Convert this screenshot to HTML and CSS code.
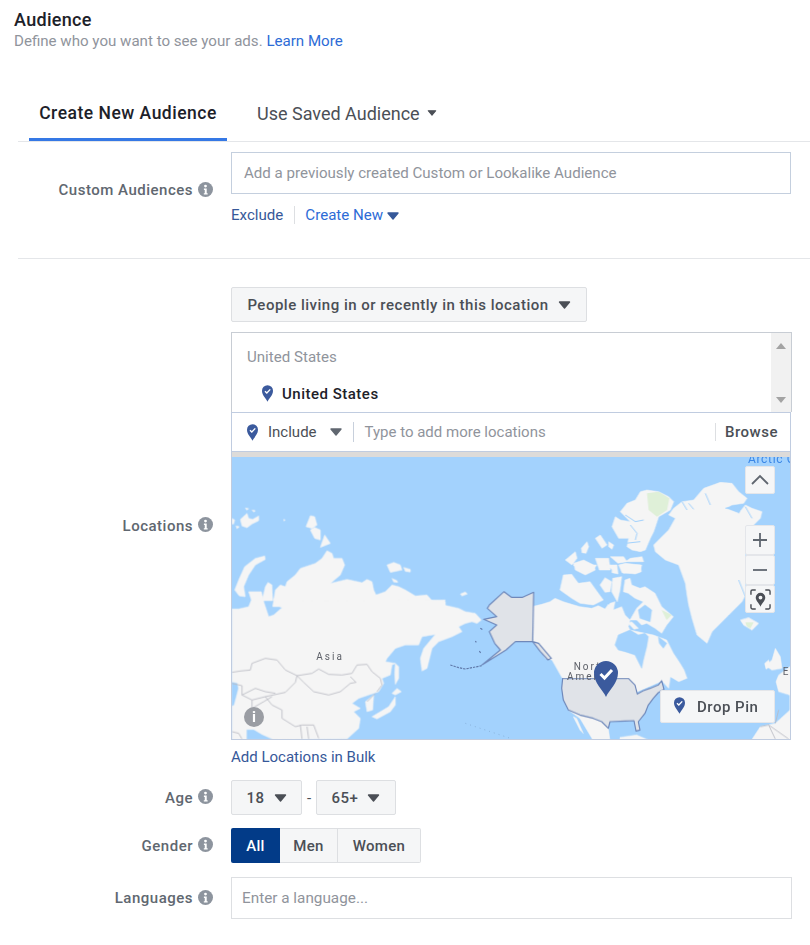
FILE: index.html
```html
<!DOCTYPE html>
<html lang="en">
<head>
<meta charset="utf-8">
<title>Audience</title>
<link rel="stylesheet" href="styles.css">
</head>
<body>
<svg class="defs" width="0" height="0" aria-hidden="true">
  <symbol id="caret" viewBox="0 0 12 8"><path d="M1 1h10L6 7z" stroke="currentColor" stroke-width="1.4" stroke-linejoin="round" fill="currentColor"/></symbol>
  <symbol id="info" viewBox="0 0 16 16"><circle cx="8" cy="8" r="8" fill="#8d949e"/><circle cx="8" cy="4.3" r="1.5" fill="#fff"/><path d="M6.3 7h3v5h1v1.4H6.2V12h1V8.4h-.9z" fill="#fff"/></symbol>
  <symbol id="pin" viewBox="0 0 24 36"><path d="M12 36C9 29 0 22 0 12a12 12 0 0 1 24 0c0 10-9 17-12 24z" fill="#3b5a9d"/><path d="M6.5 13l4 4 7.500-8" fill="none" stroke="#fff" stroke-width="3"/></symbol>
</svg>

<header class="head">
  <h1 class="title">Audience</h1>
  <p class="sub">Define who you want to see your ads. <a class="learn" href="#">Learn More</a></p>
</header>

<nav class="tabs">
  <a class="tab tab-on" href="#">Create New Audience</a>
  <a class="tab" href="#">Use Saved Audience <svg class="tab-caret"><use href="#caret"/></svg></a>
</nav>

<section class="row row-custom">
  <div class="label">Custom Audiences <svg class="info"><use href="#info"/></svg></div>
  <div class="field">
    <div class="input input-tall">Add a previously created Custom or Lookalike Audience</div>
    <div class="links">
      <a class="link-dark" href="#">Exclude</a>
      <span class="sep"></span>
      <a class="link" href="#">Create New <svg class="link-caret"><use href="#caret"/></svg></a>
    </div>
  </div>
</section>

<hr class="rule">

<section class="row row-loc">
  <div class="label">Locations <svg class="info"><use href="#info"/></svg></div>
  <div class="field">
    <button class="btn btn-wide">People living in or recently in this location <svg class="btn-caret"><use href="#caret"/></svg></button>
    <div class="selbox">
      <div class="sellist">
        <div class="selhead">United States</div>
        <div class="selitem"><svg class="pin-s"><use href="#pin"/></svg>United States</div>
      </div>
      <div class="scroll"><span class="arr arr-up"></span><span class="arr arr-down"></span></div>
    </div>
    <div class="include">
      <svg class="pin-s"><use href="#pin"/></svg>
      <span class="inc-label">Include</span>
      <svg class="inc-caret"><use href="#caret"/></svg>
      <span class="inc-text">Type to add more locations</span>
      <span class="browse">Browse</span>
    </div>
    <div class="map">
      <svg class="map-svg" viewBox="0 21 1674 849" role="img" aria-label="World map">
        <g class="shapes">
        <g class="land">
          <path d="M8,420L22,385L38,350L70,325L98,318L100,328L70,345L50,375L35,410L40,440L22,438Z"/>
          <path d="M90,452L100,410L108,397L120,405L122,452Z"/>
          <path d="M222,230L235,197L248,200L255,225L240,235Z M235,240L248,232L265,240L265,270L248,265Z M265,292L278,255L295,280Z"/>
          <path d="M25,208L45,190L50,205L62,208L80,198L80,212L60,222L45,233L30,228Z M0,205L8,210L5,222L0,222Z M12,228L22,230L15,236Z M60,180L70,182L65,186Z M40,174L50,176L44,180Z M155,208L160,210L156,213Z"/>
          <path d="M122,470L130,420L145,405L160,410L165,395L190,375L205,355L250,340L270,325L285,302L300,310L305,325L330,325L338,345L325,375L295,400L345,388L390,398L405,388L420,395L425,420L432,435L460,425L480,405L500,410L520,420L550,438L585,435L600,452L640,455L640,470Z"/>
          <path d="M465,345L485,337L505,345L510,360L475,367Z M515,352L535,358L535,366L520,364Z M480,385L495,392L497,397L485,396Z M685,432L700,426L706,432L690,438Z"/>
          <g transform="translate(0,435)">
            <path d="M0,42L20,42L50,35L58,15L50,-10L88,-10L95,20L110,65L125,60L150,38L130,28L125,10L135,20L640,15L635,30L680,40L700,50L730,55L748,75L735,85L720,80L700,85L680,95L690,110L660,125L620,140L600,160L585,220L570,228L565,190L575,160L610,118L570,125L560,150L520,150L490,160L465,190L460,200L490,205L480,210L475,240L450,250L455,265L440,290L410,300L380,310L360,325L385,340L365,350L385,370L380,400L345,432L0,436Z"/>
            <path d="M400,320L425,300L422,345L405,350Z M420,365L470,335L490,305L490,330L475,350L435,372Z M480,295L495,280L508,290L490,300Z M490,205L500,215L500,250L490,268L488,235Z"/>
          </g>
          <g transform="translate(840,0)">
            <path d="M325,185L345,160L370,150L385,125L405,120L440,125L470,140L485,155L475,180L440,200L425,245L415,265L400,300L385,305L360,300L345,290L350,265L320,265L300,230L310,200L325,210L355,215L340,200Z"/>
            <path d="M355,325L390,320L395,335L340,335Z M320,345L340,340L385,345L388,365L370,372L330,368Z M250,265L265,255L285,285L270,295Z M290,275L305,285L300,298L290,290Z M208,295L225,275L230,290L222,310L210,308Z M160,330L190,305L195,325L180,345Z M185,340L215,330L245,345L250,360L220,375L190,360Z M250,325L290,325L295,360L262,360Z M295,320L335,320L345,335L318,340Z M300,350L315,345L318,372L300,368Z"/>
            <path d="M425,285L445,265L470,240L490,205L470,195L485,175L510,155L545,150L575,115L625,97L660,100L680,125L705,145L695,160L660,165L640,175L680,190L700,165L720,175L750,185L745,205L715,235L700,260L700,435L690,455L650,495L600,545L585,580L555,555L540,505L530,465L525,435L520,400L500,345L460,330L430,305Z"/>
          </g>
          <g transform="translate(894,345)">
            <path d="M5,125L35,118L60,110L75,100L100,110L125,118L150,125L185,130L205,122L225,132L235,118L250,135L275,125L285,150L300,165L295,185L300,195L345,205L370,210L410,225L430,265L450,295L462,315L471,340L446,350L421,335L416,370L396,348L300,390L96,338L66,285L46,280L26,235L8,230Z"/>
            <path d="M90,75L100,30L125,28L145,55L180,50L205,85L220,105L190,120L150,115L125,100Z"/>
            <path d="M210,60L225,38L245,50L240,80L225,82Z M248,40L275,35L270,75L262,110L245,80Z M240,115L255,110L250,135L232,130Z"/>
            <path d="M280,80L285,45L300,40L305,60L330,70L345,65L375,85L395,125L430,155L410,180L395,205L375,190L350,175L335,180L320,165L300,165L320,130L340,110L315,100L295,85Z"/>
            <path d="M130,0L160,25L190,15L200,0Z M230,0L255,20L260,0Z M270,0L280,25L330,20L335,0Z"/>
            <path d="M295,175L305,170L325,190L312,193Z"/>
          </g>
          <g transform="translate(840,435)">
            <path d="M685,75L710,68L740,85L720,105L695,90Z"/>
            <path d="M760,212L780,195L790,160L805,185L810,220L780,225Z M758,205L770,195L775,215L762,222Z"/>
            <path d="M800,240L834,215L834,345L790,385L745,395L720,433L834,433L834,300L800,290L792,260Z"/>
          </g>
          <g transform="translate(984,600)">
            <path d="M25,180L60,195L100,205L125,215L145,235L150,272L100,272L60,205Z"/>
            <path d="M180,262L230,255L270,272L180,272Z"/>
            <path d="M40,200L50,205L70,250L60,240Z"/>
          </g>
        </g>
        <g class="water">
          <path transform="translate(0,435)" d="M0,262L15,265L18,280L5,330L0,332Z M45,405L65,405L90,420L120,433L45,433Z"/>
          <g transform="translate(894,345)">
            <path d="M255,240L265,210L300,195L325,210L345,205L355,215L350,245L345,265L340,285L335,310L325,290L315,270L285,260L265,255Z"/>
            <path d="M385,215L410,235L400,250L388,235Z"/>
            <path d="M325,135L345,120L365,135L360,170L330,160Z"/>
          </g>
        </g>
        <g class="rivers">
          <g transform="translate(840,0)">
            <path d="M340,195L370,215L395,210M355,225L375,250L370,270M340,280L385,275"/>
            <path d="M510,155L525,180M530,160L545,178M580,130L595,165M640,175L690,165L680,190M700,170L720,205"/>
            <path d="M680,390L700,440"/>
          </g>
        </g>
        <g class="green">
          <path transform="translate(840,0)" d="M405,130L440,125L472,145L465,180L435,200L410,180Z"/>
          <path transform="translate(840,435)" d="M700,82L725,82L715,100L705,95Z"/>
          <path transform="translate(894,345)" d="M395,135L425,150L410,165Z"/>
        </g>
        <g class="borders" transform="translate(0,435)">
          <path d="M0,232L25,228L55,225L60,205L100,190L135,195L160,225L195,242L240,235L260,222L290,238L330,240L360,235L375,210L405,208L420,230L445,250L450,270L435,290"/>
          <path d="M195,242L215,262L245,290L290,300L325,290L355,265L372,262L355,245"/>
          <path d="M0,265L30,272L30,300L60,315L100,305L160,292L190,262L195,242"/>
          <path d="M30,300L70,280L100,290L130,295M100,305L120,330L150,345L150,370L190,395L210,390L245,390L260,430M205,390L210,432M230,432L225,395M0,410L20,415L30,432M60,315L60,340L95,320L120,305M405,320L430,295"/>
        </g>
        <g class="borders" transform="translate(840,435)">
          <path d="M745,395L770,390L790,432M770,390L830,432M790,385L800,345"/>
        </g>
        <g class="us">
          <path transform="translate(0,435)" d="M905,-8L872,7L838,7L816,-10L772,30L766,40L794,65L755,73L794,90L772,110L788,145L805,165L750,210L822,165L850,140L902,140Z"/>
          <path transform="translate(840,435)" d="M62,140L80,145L118,190L108,195L85,170Z"/>
          <path transform="translate(984,600)" d="M8,85L100,85L205,85L225,105L232,132L250,122L270,115L295,105L305,92L312,118L295,128L280,145L265,165L255,190L235,215L240,240L228,243L222,212L195,213L150,215L145,235L125,215L100,205L60,195L25,180L10,150L5,115Z"/>
        </g>
        <g class="aleut" transform="translate(0,435)">
          <path d="M655,210L680,218L700,222L750,212M745,100L752,104M730,138L733,142M742,168L746,174"/>
          <path class="dots" d="M700,385L835,430"/>
        </g>
        </g>
        <text class="lbl" x="253" y="630">Asia</text>
        <text class="lbl" x="1025" y="660">North</text>
        <text class="lbl" x="1005" y="690">America</text>
        <text class="lbl" x="1652" y="676">Eu</text>
        <text class="lbl-arctic" x="1548" y="40">Arctic Ocean</text>
      </svg>
      <svg class="map-pin"><use href="#pin"/></svg>
      <span class="map-info">i</span>
      <button class="ctl ctl-up"><svg class="ctl-ic" viewBox="0 0 20 20"><path d="M2 14l8-8 8 8" fill="none" stroke="#606770" stroke-width="1.800"/></svg></button>
      <button class="ctl ctl-plus"><svg class="ctl-ic" viewBox="0 0 20 20"><path d="M10 3v14M3 10h14" fill="none" stroke="#606770" stroke-width="1.800"/></svg></button>
      <button class="ctl ctl-minus"><svg class="ctl-ic" viewBox="0 0 20 20"><path d="M3 10h14" fill="none" stroke="#606770" stroke-width="1.800"/></svg></button>
      <button class="ctl ctl-loc"><svg class="ctl-ic ctl-big" viewBox="0 0 22 22"><path d="M1 6V2.500A1.500 1.500 0 0 1 2.500 1H6M16 1h3.500A1.500 1.500 0 0 1 21 2.500V6M21 16v3.500a1.500 1.500 0 0 1-1.500 1.500H16M6 21H2.500A1.500 1.500 0 0 1 1 19.500V16" fill="none" stroke="#4b4f56" stroke-width="1.500"/><path fill-rule="evenodd" d="M11 18.500C9.500 15 6 12.500 6 9a5 5 0 0 1 10 0c0 3.500-3.500 6-5 9.500zM11 7a2 2 0 1 0 0 4 2 2 0 0 0 0-4z" fill="#4b4f56"/></svg></button>
      <button class="drop"><svg class="pin-s"><use href="#pin"/></svg>Drop Pin</button>
    </div>
    <a class="bulk" href="#">Add Locations in Bulk</a>
  </div>
</section>

<section class="row row-age">
  <div class="label">Age <svg class="info"><use href="#info"/></svg></div>
  <div class="field field-inline">
    <button class="btn btn-age">18 <svg class="btn-caret"><use href="#caret"/></svg></button>
    <span class="dash">-</span>
    <button class="btn btn-age2">65+ <svg class="btn-caret"><use href="#caret"/></svg></button>
  </div>
</section>

<section class="row row-gender">
  <div class="label">Gender <svg class="info"><use href="#info"/></svg></div>
  <div class="field field-inline">
    <button class="seg seg-on">All</button><button class="seg seg-men">Men</button><button class="seg seg-women">Women</button>
  </div>
</section>

<section class="row row-lang">
  <div class="label">Languages <svg class="info"><use href="#info"/></svg></div>
  <div class="field">
    <div class="input input-lang">Enter a language...</div>
  </div>
</section>
</body>
</html>
```

FILE: styles.css
```css
* { box-sizing: border-box; }
html, body { margin: 0; padding: 0; background: #fff; }
body {
  width: 810px;
  height: 945px;
  overflow: hidden;
  font-family: Roboto, "Liberation Sans", Arial, sans-serif;
  font-size: 15.1px;
  color: #1d2129;
}
a { text-decoration: none; }
button { font-family: inherit; margin: 0; }
.defs { position: absolute; }

.head { padding: 10px 0 0 14px; height: 94px; }
.title { margin: 0; font-size: 18px; letter-spacing: .3px; line-height: 20px; font-weight: 500; color: #1d2129; }
.sub { margin: 2px 0 0; font-size: 15.1px; line-height: 18px; color: #90949c; }
.learn { color: #2d6bd6; }

.tabs { display: flex; margin-left: 18px; padding-left: 11px; height: 48px; border-bottom: 1px solid #e4e6e9; }
.tab { display: flex; align-items: center; height: 47px; padding-bottom: 9px; font-size: 18px; color: #4b4f56; }
.tab-on { width: 198px; justify-content: center; padding-bottom: 6px; font-size: 17.5px; letter-spacing: .5px; font-weight: 500; color: #1d2129; border-bottom: 3px solid #3578e5; margin-right: 30px; }
.tab-caret { width: 10px; height: 6px; margin-left: 7px; color: #4b4f56; }

.row { display: flex; align-items: center; }
.label {
  display: flex;
  align-items: center;
  justify-content: flex-end;
  gap: 5px;
  width: 213px;
  flex: none;
  font-size: 15px;
  letter-spacing: .5px;
  font-weight: 500;
  color: #606770;
}
.info { width: 15px; height: 15px; flex: none; margin-top: -2px; }
.field { margin-left: 18px; width: 561px; }
.field-inline { display: flex; align-items: center; }

.input { border: 1px solid #c4cfde; display: flex; align-items: center; font-size: 15.1px; color: #90949c; }
.input-tall { height: 42px; width: 560px; padding-left: 12px; }
.input-lang { height: 42px; padding-left: 10px; font-size: 15.3px; border-color: #dddfe2; }

.row-custom { padding-top: 10px; height: 116px; align-items: flex-start; }
.row-custom .label { margin-top: 29px; }
.links { display: flex; align-items: center; margin-top: 11px; height: 20px; font-size: 15.1px; }
.link-dark { color: #365899; }
.link { color: #2d6bd6; }
.link-caret { width: 12px; height: 8px; color: #365899; }
.sep { width: 1px; height: 18px; background: #dddfe2; margin: 0 10px 0 11px; }

.rule { height: 1px; margin: 0 0 0 18px; border: 0; background: #e4e6e9; }

.row-loc { margin-top: 28px; }
.row-loc .label { padding-bottom: 3px; }
.btn {
  display: inline-flex;
  align-items: center;
  justify-content: center;
  height: 35px;
  border: 1px solid #dddfe2;
  border-radius: 2px;
  background: #f5f6f7;
  font-size: 15px;
  letter-spacing: .5px;
  font-weight: 500;
  color: #4b4f56;
  padding: 0;
}
.btn-wide { width: 356px; }
.btn-caret { width: 13px; height: 8px; margin-left: 9px; color: #4b4f56; }

.selbox { display: flex; margin-top: 10px; width: 561px; height: 80px; border: 1px solid #c8cdd4; border-bottom: 0; }
.sellist { flex: 1; padding-left: 15px; }
.selhead { margin-top: 15px; line-height: 18px; font-size: 15.1px; color: #90949c; }
.selitem { display: flex; align-items: center; margin-top: 19px; margin-left: 15px; font-size: 15px; font-weight: 500; color: #1d2129; line-height: 18px; letter-spacing: .5px; }
.pin-s { width: 11px; height: 17px; flex: none; }
.selitem .pin-s { margin-right: 9px; margin-top: -2px; }
.scroll { position: relative; width: 20px; background: #f1f1f1; }
.arr { position: absolute; left: 5px; width: 0; height: 0; border-left: 5px solid transparent; border-right: 5px solid transparent; }
.arr-up { top: 10px; border-bottom: 6px solid #a3a3a3; }
.arr-down { bottom: 9px; border-top: 6px solid #a3a3a3; }

.include { display: flex; align-items: center; width: 560px; height: 40px; padding: 0 12px 0 15px; border: 1px solid #c0cce0; font-size: 15px; }
.inc-label { margin-left: 10px; color: #4b4f56; }
.inc-caret { width: 12px; height: 8px; margin-left: 13px; color: #606770; }
.inc-text { flex: 1; margin-left: 11px; padding-left: 11px; border-left: 1px solid #c8d0dc; color: #90949c; line-height: 20px; }
.browse { padding-left: 9px; border-left: 1px solid #dddfe2; font-size: 15px; letter-spacing: .5px; font-weight: 500; color: #4b4f56; line-height: 18px; }

.map { position: relative; width: 560px; height: 288px; border: 1px solid #c0cce0; border-top: 0; padding-top: 5px; background: #dddbd9; overflow: hidden; }
.map-svg { display: block; width: 558px; height: 283px; background: #a3d2fd; }
.shapes { filter: blur(.35px); }
.land path { fill: #f5f5f5; stroke: #f5f5f5; stroke-width: 1.500; stroke-linejoin: round; }
.water path { fill: #a3d2fd; stroke: #a3d2fd; stroke-width: 1.500; stroke-linejoin: round; }
.green path { fill: #dff0d8; }
.rivers path { fill: none; stroke: #a3d2fd; stroke-width: 3; }
.borders path { fill: none; stroke: #b9bac3; stroke-width: 2.500; stroke-linejoin: round; }
.us path { fill: #e0e3e8; stroke: #6f88ba; stroke-width: 3.500; stroke-linejoin: round; }
.aleut path { fill: none; stroke: #5f78a8; stroke-width: 3.500; stroke-dasharray: 7 3; }
.aleut .dots { stroke: #7fa4cc; stroke-width: 2; stroke-dasharray: 3 12; }
.lbl { font-family: Roboto, sans-serif; font-size: 30px; letter-spacing: 6px; fill: #5d6068; }
.lbl-arctic { font-family: Roboto, sans-serif; font-size: 36px; letter-spacing: 2px; fill: #3a86e6; }
.map-pin { position: absolute; left: 361px; top: 209px; width: 26px; height: 36px; }
.map-info { position: absolute; left: 12px; top: 255px; width: 20px; height: 20px; border-radius: 50%; background: #9a9da3; color: #fff; font-size: 15px; font-weight: 700; line-height: 20px; text-align: center; }

.ctl { position: absolute; left: 513px; width: 30px; height: 28px; padding: 0; display: flex; align-items: center; justify-content: center; background: #f5f6f7; border: 1px solid #e4e6ea; border-radius: 2px; }
.ctl-up { top: 14px; }
.ctl-plus { top: 73px; height: 30px; }
.ctl-minus { top: 103px; height: 30px; }
.ctl-loc { top: 133px; }
.ctl-ic { width: 20px; height: 20px; }
.ctl-big { width: 21px; height: 21px; }
.drop { position: absolute; left: 428px; top: 238px; width: 115px; height: 33px; padding: 0 0 0 13px; display: flex; align-items: center; background: #f5f6f7; border: 1px solid #e4e6ea; border-radius: 2px; font-size: 15px; font-weight: 500; color: #4b4f56; letter-spacing: .5px; }
.drop .pin-s { margin-right: 12px; margin-top: -3px; }
.bulk { display: block; margin-top: 8px; height: 19px; font-size: 15px; line-height: 19px; color: #365899; }

.row-age { margin-top: 13px; height: 35px; }
.btn-age { width: 71px; }
.btn-age2 { width: 80px; }
.dash { width: 14px; text-align: center; color: #4b4f56; }

.row-gender { margin-top: 13px; height: 35px; }
.seg { height: 35px; padding: 0; border: 1px solid #dddfe2; border-left: 0; background: #f5f6f7; font-size: 15px; letter-spacing: .3px; font-weight: 500; color: #4b4f56; }
.seg-on { width: 49px; border: 0; border-radius: 2px 0 0 2px; background: #023b88; color: #fff; }
.seg-men { width: 58px; }
.seg-women { width: 83px; border-radius: 0 2px 2px 0; }

.row-lang { margin-top: 14px; }
```
